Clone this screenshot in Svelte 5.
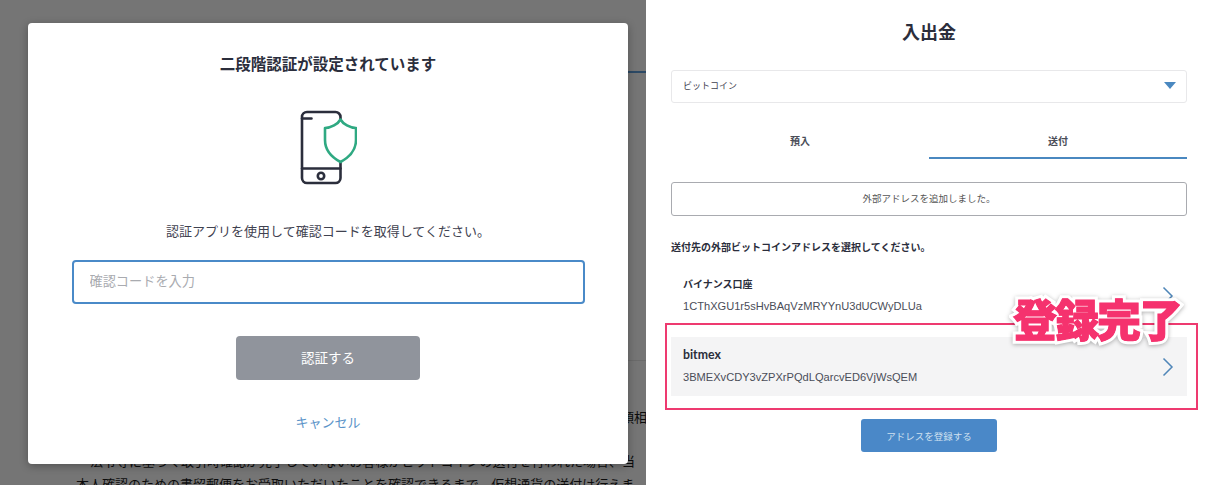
<script lang="ts">
  const addresses = [
    { name: 'バイナンス口座', address: '1CThXGU1r5sHvBAqVzMRYYnU3dUCWyDLUa', active: false },
    { name: 'bitmex', address: '3BMEXvCDY3vZPXrPQdLQarcvED6VjWsQEM', active: true }
  ];
</script>

<div class="shot">
  <section class="left">
    <div class="page">
      <div class="tab-rule"></div>
      <div class="page-rule"></div>
      <p class="clip-line">領相</p>
      <p class="notice first">法令等に基づく取引時確認が完了していないお客様がビットコインの送付を行われた場合、当</p>
      <p class="notice">本人確認のための書留郵便をお受取いただいたことを確認できるまで、仮想通貨の送付け行えま</p>
    </div>
    <div class="scrim"></div>
    <div class="modal">
      <h2>二段階認証が設定されています</h2>
      <svg class="phone" viewBox="0 0 60 75" width="60" height="75" fill="none" stroke-width="2.6" stroke-linecap="round" stroke-linejoin="round">
        <path stroke="#2b2e3c" d="M43.5 9V7a5 5 0 0 0-5-5H10a5 5 0 0 0-5 5v61a5 5 0 0 0 5 5h28.500a5 5 0 0 0 5-5V52" />
        <path stroke="#2b2e3c" d="M5 58.500h38.500M5 8.500h9.500" />
        <circle stroke="#2b2e3c" cx="24" cy="66" r="3.2" />
        <path stroke="#2fa982" d="M43.5 9.5C46 14 53 18 59 18v12c0 11-8 18-15.500 22C36 48 28 41 28 30V18c6 0 13-4 15.500-8.500Z" />
      </svg>
      <p class="hint">認証アプリを使用して確認コードを取得してください。</p>
      <input class="code" placeholder="確認コードを入力" />
      <button class="verify" type="button">認証する</button>
      <a class="cancel" href="#cancel">キャンセル</a>
    </div>
  </section>

  <section class="right">
    <h1>入出金</h1>
    <div class="select">
      <span>ビットコイン</span>
      <i class="caret"></i>
    </div>
    <div class="tabs">
      <div class="tab">預入</div>
      <div class="tab on">送付</div>
    </div>
    <div class="added">外部アドレスを追加しました。</div>
    <p class="pick">送付先の外部ビットコインアドレスを選択してください。</p>
    <ul class="list">
      {#each addresses as item}
        <li class="row" class:active={item.active}>
          <div>
            <div class="name">{item.name}</div>
            <div class="addr">{item.address}</div>
          </div>
          <svg class="chev" viewBox="0 0 12 20" width="12" height="20" fill="none" stroke="#4f86b8" stroke-width="1.5">
            <path d="M1.500 1.500 10 10l-8.500 8.500" />
          </svg>
        </li>
      {/each}
    </ul>
    <button class="register" type="button">アドレスを登録する</button>

    <div class="mark"></div>
    <div class="stamp" data-text="登録完了">登録完了</div>
  </section>
</div>

<style>
  :global(body) {
    margin: 0;
    background: #fff;
  }

  .shot {
    display: flex;
    width: 1218px;
    height: 485px;
    overflow: hidden;
    font-family: Lato, "Noto Sans CJK JP", sans-serif;
    color: #2b2e3c;
  }

  .left {
    position: relative;
    width: 646px;
    height: 485px;
    flex: none;
    overflow: hidden;
  }

  .page {
    height: 485px;
    overflow: hidden;
    background: #fff;
    white-space: nowrap;
    font-size: 13px;
    color: #1c1c1c;
  }

  .tab-rule {
    height: 2px;
    margin: 71px 0 0 400px;
    background: #609fdc;
  }

  .page-rule {
    height: 1px;
    margin: 287px 0 0 400px;
    background: #e8e8e8;
  }

  .clip-line {
    width: 647px;
    margin: 46px 0 0;
    line-height: 20px;
    text-align: right;
  }

  .notice {
    margin: 0;
    line-height: 23px;
  }

  .notice.first {
    margin-top: 23px;
    padding-left: 90px;
  }

  .notice:not(.first) {
    padding-left: 76px;
  }

  .scrim {
    position: absolute;
    inset: 0;
    background: rgba(0, 0, 0, 0.54);
  }

  .modal {
    position: absolute;
    left: 28px;
    top: 23px;
    width: 600px;
    height: 441px;
    box-sizing: border-box;
    padding-top: 31px;
    display: flex;
    flex-direction: column;
    align-items: center;
    background: #fff;
    border-radius: 4px;
    box-shadow: 0 2px 8px rgba(0, 0, 0, 0.3);
  }

  h2 {
    margin: 0;
    font-size: 15.500px;
    line-height: 20px;
    font-weight: 700;
  }

  .phone {
    margin: 36px 2px 0 0;
  }

  .hint {
    margin: 36px 0 0;
    font-size: 13px;
    line-height: 20px;
    color: #3f4250;
  }

  .code {
    width: 513px;
    height: 44px;
    box-sizing: border-box;
    margin-top: 19px;
    padding: 0 16px 2px;
    border: 2px solid #4a8ac8;
    border-radius: 4px;
    outline: none;
    font: inherit;
    font-size: 13.200px;
  }

  .code::placeholder {
    color: #a9abb0;
    opacity: 1;
  }

  .verify {
    width: 184px;
    height: 44px;
    margin-top: 32px;
    padding: 0 0 3px;
    border: 0;
    border-radius: 4px;
    background: #90949c;
    color: #fff;
    font: inherit;
    font-size: 13.500px;
  }

  .cancel {
    margin-top: 32px;
    font-size: 13px;
    line-height: 20px;
    color: #5a93c8;
    text-decoration: none;
  }

  .right {
    position: relative;
    width: 572px;
    box-sizing: border-box;
    padding: 0 31px 0 25px;
    background: #fff;
  }

  h1 {
    margin: 20px 0 0;
    text-align: center;
    font-size: 18px;
    line-height: 24px;
    font-weight: 700;
  }

  .select {
    display: flex;
    align-items: center;
    justify-content: space-between;
    height: 33px;
    box-sizing: border-box;
    margin-top: 26px;
    padding: 0 10px 2px 11px;
    border: 1px solid #e8e8ea;
    border-radius: 3px;
    font-size: 9px;
    color: #3f4250;
  }

  .caret {
    width: 0;
    height: 0;
    border-left: 6px solid transparent;
    border-right: 6px solid transparent;
    border-top: 7px solid #4a88c0;
  }

  .tabs {
    display: grid;
    grid-template-columns: 258px 258px;
    margin-top: 21px;
  }

  .tab {
    height: 35px;
    box-sizing: border-box;
    line-height: 34px;
    text-align: center;
    font-size: 10px;
    font-weight: 700;
    color: #4a4d58;
  }

  .tab.on {
    border-bottom: 2px solid #4a88c0;
  }

  .added {
    height: 34px;
    box-sizing: border-box;
    margin-top: 23px;
    line-height: 32px;
    text-align: center;
    font-size: 9.500px;
    color: #555;
    border: 1px solid #a9abb0;
    border-radius: 3px;
  }

  .pick {
    margin: 24px 0 0;
    font-size: 10px;
    line-height: 14px;
    font-weight: 700;
  }

  .list {
    list-style: none;
    margin: 12px 0 0;
    padding: 0;
  }

  .row {
    display: flex;
    align-items: center;
    justify-content: space-between;
    height: 59px;
    box-sizing: border-box;
    padding: 0 12px 2px;
    margin-bottom: 1px;
    font-size: 10px;
  }

  .row.active {
    background: #f4f4f5;
    margin-top: 12px;
  }

  .row.active .name {
    font-size: 12.300px;
  }

  .name {
    font-weight: 700;
    line-height: 16px;
    color: #2b2e3c;
  }

  .addr {
    margin-top: 6px;
    line-height: 16px;
    font-family: "Liberation Sans", sans-serif;
    font-size: 11.100px;
    color: #4a4d58;
  }

  .chev {
    display: block;
    margin: 2px 1px 0 0;
  }

  .register {
    display: block;
    width: 136px;
    height: 33px;
    margin: 23px 0 0 190px;
    border: 0;
    border-radius: 3px;
    background: #4a88c8;
    color: #cfe0f0;
    font: inherit;
    font-size: 9.500px;
  }

  .mark {
    position: absolute;
    left: 19px;
    top: 323px;
    width: 533px;
    height: 87px;
    box-sizing: border-box;
    border: 2px solid #ee3a70;
  }

  .stamp {
    position: absolute;
    left: 367px;
    top: 292px;
    font-size: 44px;
    letter-spacing: -2px;
    line-height: 56px;
    font-weight: 900;
    white-space: nowrap;
    color: #f5326e;
    -webkit-text-stroke: 7px #fff;
    paint-order: stroke fill;
    filter: drop-shadow(0 1px 2px rgba(0, 0, 0, 0.3));
  }

  .stamp::after {
    content: attr(data-text);
    position: absolute;
    left: 0;
    top: 0;
    -webkit-text-stroke: 1px #f5326e;
  }
</style>
